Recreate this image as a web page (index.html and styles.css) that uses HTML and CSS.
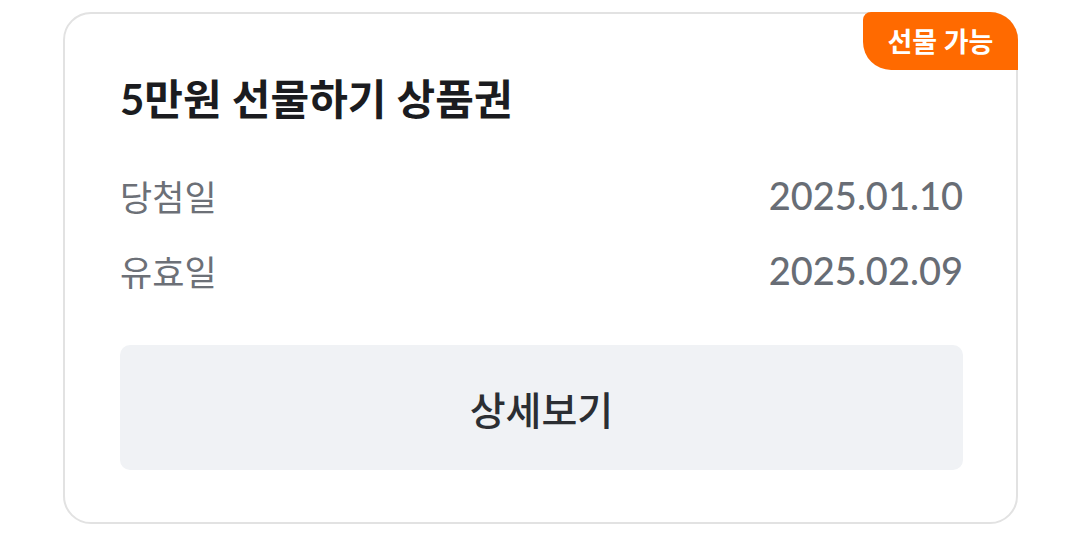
FILE: index.html
```html
<!DOCTYPE html>
<html lang="ko">
<head>
    <meta charset="UTF-8">
    <meta name="viewport" content="width=device-width, initial-scale=1.0">
    <title>선물하기 상품권</title>
    <link rel="stylesheet" href="styles.css">
</head>
<body>
    <div class="card">
        <span class="badge">선물 가능</span>
        <h2 class="title">5만원 선물하기 상품권</h2>

        <div class="info-row">
            <span class="info-label">당첨일</span>
            <span class="info-value">2025.01.10</span>
        </div>
        <div class="info-row">
            <span class="info-label">유효일</span>
            <span class="info-value">2025.02.09</span>
        </div>

        <button type="button" class="btn-detail">상세보기</button>
    </div>
</body>
</html>
```

FILE: styles.css
```css
:root {
    --orange: #ff6a00;
    --text-dark: #1b1c20;
    --text-grey: #6c7077;
    --border: #e2e2e2;
    --btn-bg: #f0f2f5;
}

* {
    box-sizing: border-box;
    margin: 0;
    padding: 0;
}

body {
    background: #ffffff;
    font-family: Lato, "Noto Sans CJK KR", sans-serif;
}

.card {
    position: relative;
    width: 955px;
    height: 512px;
    margin: 12px 0 0 63px;
    padding: 60px 53px 0 55px;
    border: 2px solid var(--border);
    border-radius: 28px;
    background: white;
}

.badge {
    position: absolute;
    top: -2px;
    right: -2px;
    width: 155px;
    height: 58px;
    display: flex;
    align-items: center;
    justify-content: center;
    padding-bottom: 2px;
    background: var(--orange);
    color: white;
    font-size: 27px;
    font-weight: 700;
    border-radius: 8px 28px 0 28px;
}

.title {
    font-size: 42px;
    line-height: 50px;
    font-weight: 700;
    color: var(--text-dark);
    margin-bottom: 51px;
}

.info-row {
    display: flex;
    justify-content: space-between;
    align-items: center;
    height: 40px;
    font-size: 35px;
    color: var(--text-grey);
}

.info-row + .info-row {
    margin-top: 35px;
}

.info-value {
    font-size: 38px;
    font-weight: 500;
    color: #686d75;
}

.btn-detail {
    display: block;
    width: 100%;
    height: 125px;
    margin-top: 55px;
    border: none;
    border-radius: 10px;
    background: var(--btn-bg);
    color: #2b2e33;
    font-family: inherit;
    font-size: 39px;
    font-weight: 500;
    cursor: pointer;
}
```
